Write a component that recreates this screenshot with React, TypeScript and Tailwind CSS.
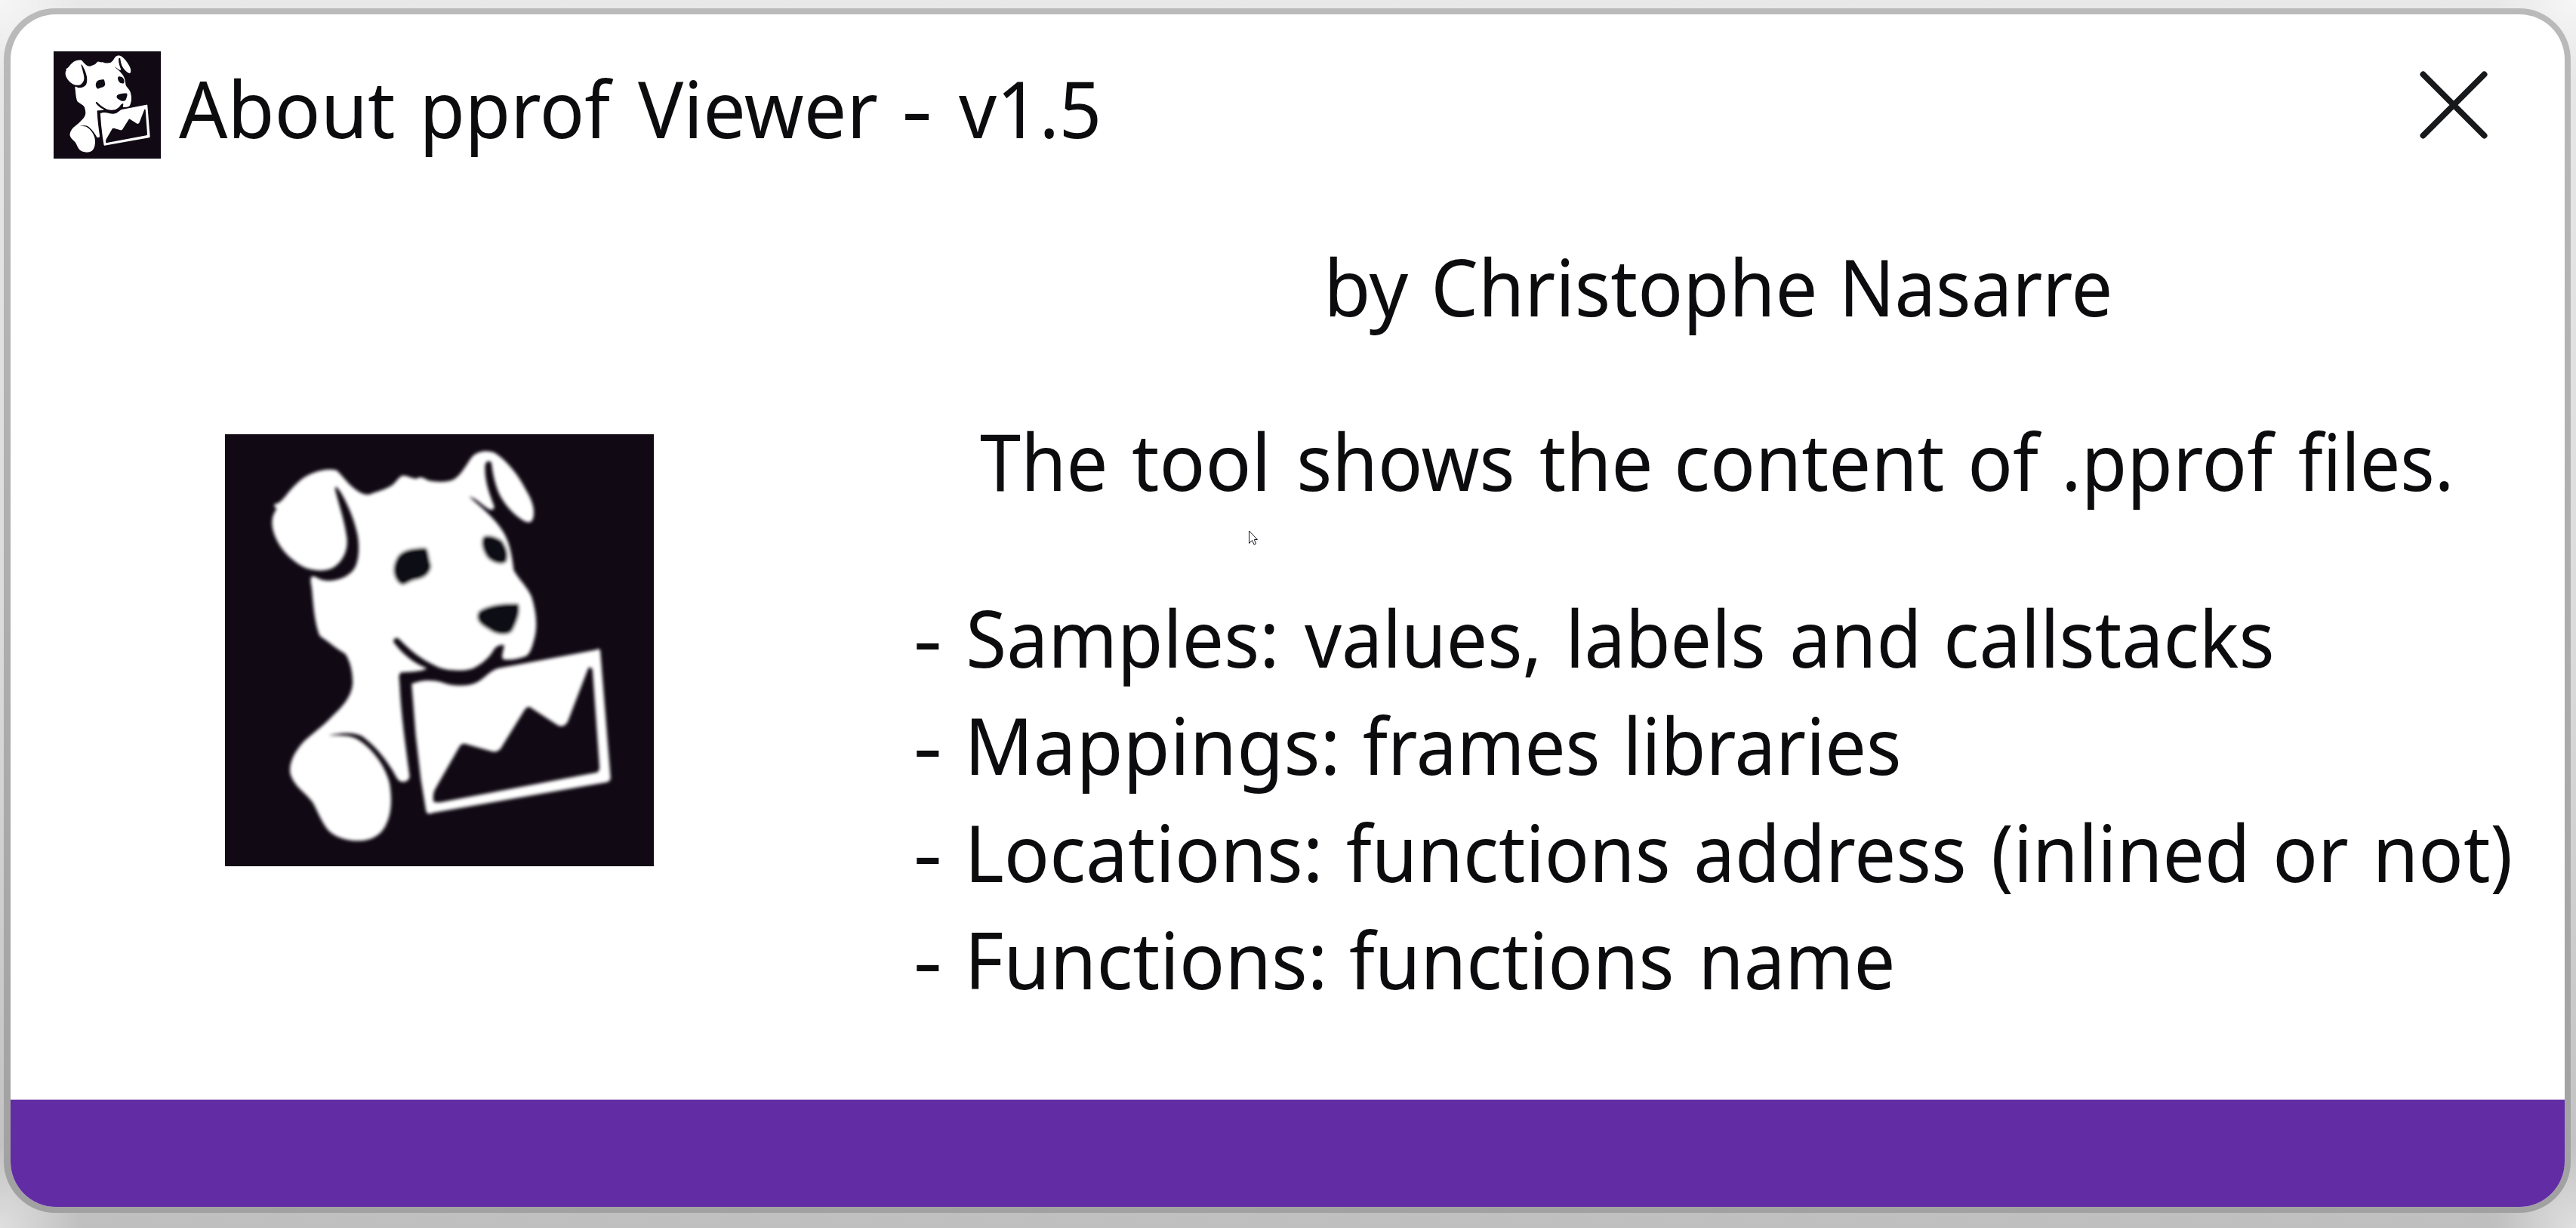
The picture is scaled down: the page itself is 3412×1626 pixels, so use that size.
type Word = [text: string, start: number, end: number];

const FONT_SIZE = 104;
const SPACE = FONT_SIZE * 0.26;

const title: Word[] = [
  ["About", 237, 522],
  ["pprof", 563, 813],
  ["Viewer", 845, 1162],
  ["-", 1199, 1231],
  ["v1.5", 1270, 1454],
];

const author: Word[] = [
  ["by", 1761, 1866],
  ["Christophe", 1901, 2403],
  ["Nasarre", 2445, 2794],
];

const summary: Word[] = [
  ["The", 1299, 1463],
  ["tool", 1500, 1675],
  ["shows", 1722, 2003],
  ["the", 2040, 2185],
  ["content", 2222, 2574],
  ["of", 2611, 2705],
  [".pprof", 2737, 3015],
  ["files.", 3045, 3244],
];

const details: Word[][] = [
  [
    ["-", 1214, 1244],
    ["Samples:", 1284, 1688],
    ["values,", 1728, 2035],
    ["labels", 2081, 2335],
    ["and", 2374, 2538],
    ["callstacks", 2579, 3009],
  ],
  [
    ["-", 1214, 1244],
    ["Mappings:", 1287, 1769],
    ["frames", 1806, 2116],
    ["libraries", 2157, 2515],
  ],
  [
    ["-", 1214, 1244],
    ["Locations:", 1287, 1746],
    ["functions", 1784, 2209],
    ["address", 2247, 2601],
    ["(inlined", 2641, 2973],
    ["or", 3015, 3110],
    ["not)", 3150, 3325],
  ],
  [
    ["-", 1214, 1244],
    ["Functions:", 1287, 1752],
    ["functions", 1788, 2214],
    ["name", 2257, 2506],
  ],
];

const measurer = document.createElement("canvas").getContext("2d")!;

function inkBounds(text: string) {
  measurer.font = `${FONT_SIZE}px "Noto Sans"`;
  const m = measurer.measureText(text);
  return { left: -m.actualBoundingBoxLeft, right: m.actualBoundingBoxRight };
}

/** One line of text whose words are condensed to their own widths. */
function Line({ words, from }: { words: Word[]; from: number }) {
  return (
    <p className="h-[142px] whitespace-nowrap text-[104px] leading-[142px]">
      {words.map(([text, start, end], i) => {
        const ink = inkBounds(text);
        const scale = (end - start) / (ink.right - ink.left);
        const gap = i === 0 ? start - from : start - words[i - 1][2] - SPACE;
        return (
          <span key={i}>
            {i > 0 && " "}
            <span
              className="inline-block origin-left"
              style={{
                width: end - start,
                marginLeft: gap,
                transform: `scaleX(${scale}) translateX(${-ink.left}px)`,
              }}
            >
              {text}
            </span>
          </span>
        );
      })}
    </p>
  );
}

function Logo({ className }: { className: string }) {
  return (
    <svg viewBox="46 40 1484 1495" preserveAspectRatio="none" className={className}>
      <defs>
        <filter id="soften" x="-5%" y="-5%" width="110%" height="110%">
          <feGaussianBlur stdDeviation="6" />
        </filter>
      </defs>
      <rect x="46" y="40" width="1484" height="1495" fill="#110914" />
      <g filter="url(#soften)">
        <g fill="#fff">
          {/* head, neck and chest */}
          <path d="M432 165C450 180 465 205 490 225C510 242 530 252 548 248C570 238 600 232 622 218C640 205 648 185 662 183C680 183 700 198 712 192C725 183 738 195 750 200C780 206 815 207 838 196C865 180 880 145 902 117C920 98 955 94 980 105C1020 130 1060 180 1085 228C1105 262 1118 290 1114 322C1110 348 1098 348 1080 340C1040 315 1010 280 992 240C980 210 972 175 968 138C960 130 948 132 946 150C944 200 960 245 978 290C975 305 968 303 955 297C930 280 915 262 890 255C930 290 985 335 1010 380C1030 415 1038 450 1045 510C1060 540 1095 570 1108 605C1122 650 1128 700 1118 742C1110 775 1102 800 1088 808C1060 818 1030 824 1008 818C1000 808 1012 785 1012 770C1000 768 985 772 975 788C960 815 930 838 905 850C870 862 810 860 775 842C720 815 690 790 648 748C638 740 626 748 630 760C660 800 695 830 745 850C725 862 690 862 658 864C646 866 648 880 650 900C655 1010 670 1110 685 1225C680 1245 655 1250 642 1232C615 1180 570 1120 520 1085C490 1068 440 1074 405 1082C440 1082 480 1080 505 1096C560 1130 600 1190 615 1245C625 1300 622 1350 606 1385C590 1425 560 1442 525 1446C480 1450 435 1440 405 1412C380 1385 365 1340 350 1315C325 1280 285 1260 272 1215C266 1180 285 1140 320 1102C345 1078 385 1050 415 1018C450 985 485 950 488 900C488 865 480 825 462 800C435 785 400 755 374 738C358 700 352 640 348 590C347 565 338 545 345 533C360 528 370 546 400 547C440 548 475 530 490 510C510 485 512 430 505 390C495 340 475 290 448 243C435 225 425 210 428 235C442 290 460 340 468 400C472 440 455 475 430 495C405 518 350 515 315 498C270 472 235 435 218 390C205 355 205 325 225 298C215 290 212 282 225 280C245 275 265 235 300 205C335 172 395 155 432 165Z" />
          {/* framed chart */}
          <path
            fillRule="evenodd"
            d="M692 904C720 890 760 888 795 898C830 912 880 915 915 900C945 885 960 860 990 850L1330 786Q1342 778 1345 792L1380 1225Q1382 1240 1368 1244L765 1350Q746 1358 742 1345L724 1235L706 1080ZM1303 850L1232 1035Q1218 1058 1196 1046L1110 990Q1096 976 1084 992L1000 1128Q988 1142 970 1138L880 1112Q866 1108 858 1120L775 1265Q763 1285 768 1312Q785 1316 800 1312L1330 1211Q1342 1208 1342 1192L1318 855Q1310 840 1303 850Z"
          />
        </g>
        <g fill="#110914">
          <path d="M640 470C655 440 690 435 740 433C752 440 750 465 760 495C757 525 735 540 700 545C680 550 670 565 655 560C630 545 620 505 640 470Z" />
          <path d="M940 395C960 385 985 395 1005 408C1020 430 1030 455 1020 482C1005 495 970 487 952 465C935 440 930 410 940 395Z" />
          <path d="M925 652C950 632 1010 622 1060 626C1072 640 1062 680 1042 718C1028 740 985 735 960 716C930 700 908 680 925 652Z" />
        </g>
      </g>
    </svg>
  );
}

function CloseIcon() {
  return (
    <svg viewBox="0 0 90 90" className="h-[90px] w-[90px]" fill="none" stroke="#17191b" strokeWidth="8" strokeLinecap="round">
      <path d="M4.500 4.500L85.500 85.500M85.500 4.500L4.500 85.500" />
    </svg>
  );
}

function Pointer() {
  return (
    <svg viewBox="0 0 12 20" className="absolute left-[1654px] top-[702px] h-5 w-3" fill="#fff" stroke="#15151f" strokeWidth="1">
      <path d="M.5 1V17.500L4.500 13.500L7 19L9.500 18L7.300 12.500H11.500Z" />
    </svg>
  );
}

export default function App() {
  return (
    <div className="relative h-[1626px] w-[3412px] bg-linear-to-b from-[#e8e8e8] via-[#dcdcdc] to-[#bfbfbf] pl-[5px] pt-[11px] font-['Noto_Sans',sans-serif] text-[#0c0c0e]">
      <div className="pointer-events-none absolute inset-0 bg-[radial-gradient(circle_at_0_0,rgba(255,255,255,0.6),transparent_110px),radial-gradient(circle_at_100%_0,rgba(255,255,255,0.6),transparent_110px),radial-gradient(circle_at_0_100%,rgba(255,255,255,0.5),transparent_110px),radial-gradient(circle_at_100%_100%,rgba(255,255,255,0.5),transparent_110px)]" />
      <div className="relative h-[1595px] w-[3400px] rounded-[68px] bg-linear-to-b from-[#bababa] to-[#a1a1a1] p-2 pl-[9px]">
        <div className="flex h-full flex-col overflow-hidden rounded-[60px] bg-white">
          <header className="flex h-[289px] items-start pl-[57px] pr-[102px] pt-[49px]">
            <Logo className="h-[142px] w-[142px]" />
            <div className="grow pt-[4px]">
              <Line words={title} from={213} />
            </div>
            <div className="pt-[26px]">
              <CloseIcon />
            </div>
          </header>
          <main className="flex grow items-start pl-[284px]">
            <Logo className="mt-[267px] h-[572px] w-[568px]" />
            <div className="ml-[334px] flex flex-col">
              <Line words={author} from={1200} />
              <div className="mt-[89px]">
                <Line words={summary} from={1200} />
              </div>
              <div className="mt-[92px]">
                {details.map((words, i) => (
                  <Line key={i} words={words} from={1200} />
                ))}
              </div>
            </div>
          </main>
          <footer className="h-[142px] shrink-0 bg-[#622ca5]" />
        </div>
      </div>
      <Pointer />
    </div>
  );
}
